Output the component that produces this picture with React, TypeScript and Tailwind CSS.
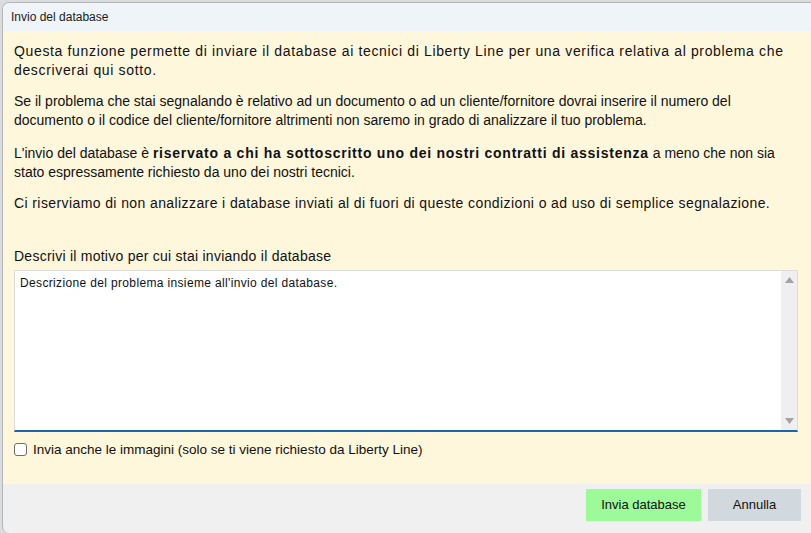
import React from "react";

const font = { fontFamily: '"Liberation Sans", Arial, sans-serif' };

function ScrollArrow({ up }: { up?: boolean }) {
  return (
    <svg width="9" height="6" viewBox="0 0 9 6" className="block">
      <path d={up ? "M0 6 L4.5 0 L9 6 Z" : "M0 0 L4.5 6 L9 0 Z"} fill="#a3a3a3" />
    </svg>
  );
}

export default function App() {
  return (
    <div className="w-[811px] h-[533px] bg-[#d9dde0] pt-[2px] overflow-hidden" style={font}>
      <div className="ml-[2px] h-[531px] flex flex-col bg-[#f0f0f0] border-l border-t border-[#b5b5b5] rounded-tl-[7px] rounded-bl-[7px] overflow-hidden">
        {/* title bar */}
        <div className="h-[28px] shrink-0 bg-[#eef4f7] flex items-center pl-[8px] text-[12px] text-[#1b1b1b]">
          Invio del database
        </div>

        {/* body */}
        <div className="bg-[#fef7dc] h-[453px] shrink-0 pl-[11px] pr-[13px] pt-[11px] text-[14px] leading-[19px] text-[#111]">
          <p className="mb-[12px] tracking-[0.65px]">
            Questa funzione permette di inviare il database ai tecnici di Liberty Line per una verifica relativa al problema che descriverai qui sotto.
          </p>
          <p className="mb-[14px]">
            Se il problema che stai segnalando è relativo ad un documento o ad un cliente/fornitore dovrai inserire il numero del documento o il codice del cliente/fornitore altrimenti non saremo in grado di analizzare il tuo problema.
          </p>
          <p className="mb-[12px]">
            L'invio del database è <b className="tracking-[0.75px]">riservato a chi ha sottoscritto uno dei nostri contratti di assistenza</b> a meno che non sia stato espressamente richiesto da uno dei nostri tecnici.
          </p>
          <p className="tracking-[0.4px]">
            Ci riserviamo di non analizzare i database inviati al di fuori di queste condizioni o ad uso di semplice segnalazione.
          </p>

          <div className="mt-[34px] mb-[4px] tracking-[0.25px]">Descrivi il motivo per cui stai inviando il database</div>

          <div className="h-[162px] bg-white border border-[#dcdcdc] border-b-2 border-b-[#1f64b0] flex">
            <div className="flex-1 px-[5px] pt-[4px] text-[12px] leading-[16px] tracking-[0.35px] text-[#111]">
              Descrizione del problema insieme all'invio del database.
            </div>
            <div className="w-[16px] bg-[#efefef] flex flex-col items-center justify-between py-[6px]">
              <ScrollArrow up />
              <ScrollArrow />
            </div>
          </div>

          <label className="mt-[8px] flex items-center gap-[6px]">
            <span className="w-[13px] h-[13px] rounded-[3px] border border-[#6e6e6e] bg-white" />
            <span className="text-[13.5px]">Invia anche le immagini (solo se ti viene richiesto da Liberty Line)</span>
          </label>
        </div>

        {/* footer */}
        <div className="flex-1 flex justify-end items-start pt-[5px] pr-[10px] gap-[7px] text-[13px] text-[#111]">
          <button className="w-[115px] h-[32px] bg-[#9cfb98]">Invia database</button>
          <button className="w-[93px] h-[32px] bg-[#d1d9de]">Annulla</button>
        </div>
      </div>
    </div>
  );
}
